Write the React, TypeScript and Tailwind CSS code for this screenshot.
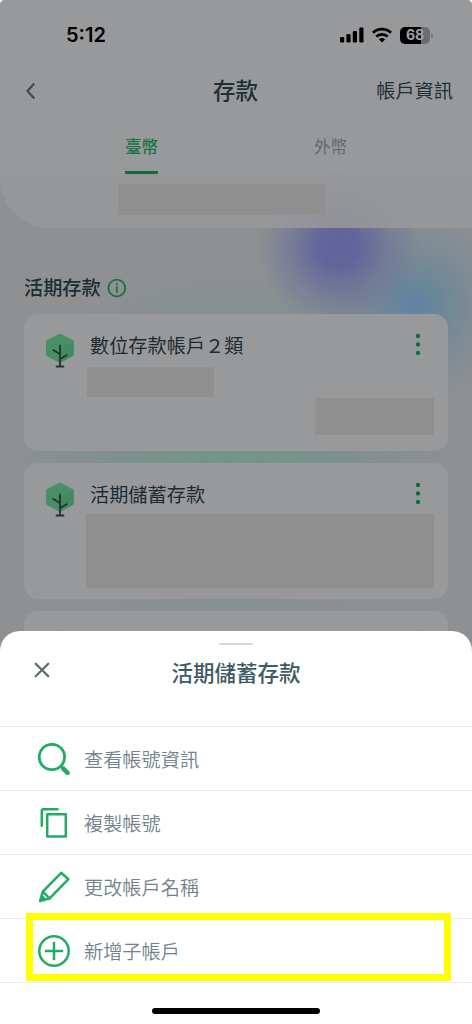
import type { ReactNode } from "react";

const GREEN = "#24ab62";

const SignalIcon = () => (
  <svg className="h-4 w-6" viewBox="0 0 24 16">
    <rect height="5.5" rx="1.2" width="4.2" x="0" y="10" />
    <rect height="8.5" rx="1.2" width="4.2" x="6.4" y="7" />
    <rect height="11.5" rx="1.2" width="4.2" x="12.8" y="4" />
    <rect height="15" rx="1.2" width="4.2" x="19.3" y="0.5" />
  </svg>
);

const WifiIcon = () => (
  <svg className="h-4 w-[20px]" viewBox="0 0 20 16">
    <g fill="none" stroke="#000" strokeWidth="2.8">
      <path d="M1 5.8a13 13 0 0 1 18 0" />
      <path d="M4.3 9.6a8.2 8.2 0 0 1 11.4 0" />
    </g>
    <path d="M6.9 12.4a4.4 4.4 0 0 1 6.2 0L10 15.6z" />
  </svg>
);

const Battery = () => (
  <div className="flex items-center gap-px">
    <div className="flex h-[17px] w-[30px] items-center justify-center rounded-[5px] bg-linear-to-r from-black from-70% to-[#6c6d6f] to-70% font-['Inter',sans-serif] text-[14px] leading-none font-bold text-[#a2a3a5]">
      68
    </div>
    <div className="h-[5px] w-[2px] rounded-r-full bg-[#77787a]" />
  </div>
);

const TreeIcon = () => (
  <svg className="mt-px h-9 w-7" viewBox="0 0 28 36">
    <path
      d="M14 2.8 26.6 9.4V22.8L14 29.5 1.4 22.8V9.4z"
      fill="#469064"
      stroke="#469064"
      strokeLinejoin="round"
      strokeWidth="2.6"
    />
    <path d="M14 16v14L27 22.8V9.4z" fill="#448a60" />
    <path
      d="M14 13.5v21M10.5 34.5h7M14 22.3 7.3 18.1M14 27 20.7 23.2"
      fill="none"
      stroke="#263134"
      strokeLinecap="round"
      strokeWidth="1.8"
    />
  </svg>
);

const MoreIcon = () => (
  <svg className="mt-px h-6 w-[6px]" fill="#08703f" viewBox="0 0 6 24">
    <circle cx="3" cy="4" r="2.2" />
    <circle cx="3" cy="12.4" r="2.2" />
    <circle cx="3" cy="20.9" r="2.2" />
  </svg>
);

const MenuIcon = ({ children }: { children: ReactNode }) => (
  <svg
    className="size-8 shrink-0"
    fill="none"
    stroke={GREEN}
    strokeLinecap="round"
    strokeLinejoin="round"
    strokeWidth="2.5"
    viewBox="0 0 32 32"
  >
    {children}
  </svg>
);

const menuItems = [
  {
    label: "查看帳號資訊",
    icon: (
      <MenuIcon>
        <circle cx="13.9" cy="14" r="12.7" strokeWidth="2.8" />
        <path d="m23 23.4 1.8 1.8" />
        <path d="m25.3 25.6 4.2 4.2" strokeWidth="4.6" />
      </MenuIcon>
    ),
  },
  {
    label: "複製帳號",
    icon: (
      <MenuIcon>
        <rect height="22.4" width="18.6" x="9.2" y="7.2" />
        <path d="M3.8 18.8V4q0-1.8 1.8-1.8h14" />
      </MenuIcon>
    ),
  },
  {
    label: "更改帳戶名稱",
    icon: (
      <MenuIcon>
        <path d="M2.2 30 4.8 20.6 23.2 1.8 30.4 8.2 11.6 27.4z" />
        <path d="M4.8 20.6 11.6 27.4" />
        <path d="M2.4 29.8 4 25.5l2.8 2.7z" fill={GREEN} />
      </MenuIcon>
    ),
  },
  {
    label: "新增子帳戶",
    icon: (
      <MenuIcon>
        <circle cx="16" cy="16" r="14.7" />
        <path d="M16 6.8v18.4M6.8 16h18.4" strokeLinecap="butt" />
      </MenuIcon>
    ),
  },
];

interface AccountCardProps {
  name: string;
  children?: ReactNode;
}

const AccountCard = ({ name, children }: AccountCardProps) => (
  <section className="h-[136.5px] rounded-[14px] bg-[#98999b] pt-[17px] pr-[14px] pl-[22px]">
    <div className="flex h-9 items-start">
      <TreeIcon />
      <h3 className="ml-4 flex-1 text-[19.2px] leading-[28px] text-[#1d2b31]">
        {name}
      </h3>
      <div className="mr-[13px]">
        <MoreIcon />
      </div>
    </div>
    {children}
  </section>
);

const Header = () => (
  <header className="relative h-[175px] bg-[#98999b] shadow-[0_1px_5px_rgba(0,0,0,0.14)]">
    <div className="flex h-[70px] items-center justify-between pr-[39px] pl-[66px]">
      <span className="font-['Inter',sans-serif] text-[20px] font-semibold text-black">
        5:12
      </span>
      <div className="flex items-center gap-[8px]">
        <SignalIcon />
        <WifiIcon />
        <Battery />
      </div>
    </div>
    <div className="grid h-[42px] grid-cols-[1fr_auto_1fr] items-center pr-[19px] pl-[25px] text-[#1f3036]">
      <svg
        className="h-5 w-3"
        fill="none"
        stroke="#434a50"
        strokeWidth="2.3"
        viewBox="0 0 12 20"
      >
        <path d="M9.3 2.5 2.5 10l6.8 7.5" />
      </svg>
      <h1 className="mr-[7px] mb-[3px] text-[22.5px] leading-none font-medium">
        存款
      </h1>
      <span className="justify-self-end text-[19.2px] leading-none">
        帳戶資訊
      </span>
    </div>
    <nav className="flex h-[62px] justify-between px-[125px] text-[16.5px]">
      <span className="flex h-full items-center border-b-[3px] border-[#18673f] pt-[10px] font-medium text-[#187346]">
        臺幣
      </span>
      <span className="flex h-full items-center pt-[7px] text-[#626a6e]">
        外幣
      </span>
    </nav>
  </header>
);

const Sheet = () => (
  <div className="absolute inset-x-0 bottom-0 flex h-[393px] flex-col rounded-t-[20px] bg-white">
    <div className="mx-auto mt-[12px] h-[2px] w-[34px] rounded-full bg-[#d2d7da]" />
    <div className="grid h-[56px] grid-cols-[1fr_auto_1fr] items-center px-[34px]">
      <svg
        className="mb-[7px] size-4"
        fill="none"
        stroke="#597069"
        strokeLinecap="round"
        strokeWidth="2.3"
        viewBox="0 0 16 16"
      >
        <path d="m1.7 1.7 12.6 12.6m0-12.6-12.6 12.6" />
      </svg>
      <h2 className="mb-[2px] text-[21.5px] leading-none font-medium text-[#405a64]">
        活期儲蓄存款
      </h2>
    </div>
    <ul className="mt-[25px] border-t border-[#eaedee]">
      {menuItems.map((item) => (
        <li
          className="flex h-16 items-center gap-[14px] border-b border-[#eaedee] pl-[38px] text-[19.2px] font-[350] text-[#72828a]"
          key={item.label}
        >
          {item.icon}
          <span className="pt-[2px] leading-none">{item.label}</span>
        </li>
      ))}
    </ul>
    <div className="mx-auto mt-[25px] h-[6px] w-[168px] rounded-full bg-black" />
    {/* Highlight around the last action */}
    <div className="absolute top-[282px] left-[26px] h-[68px] w-[425px] border-[7.5px] border-[#ffff00]" />
  </div>
);

export default function App() {
  return (
    <div className="h-[1024px] w-[472px] bg-white">
      <div className="relative h-full overflow-hidden rounded-t-[5px] bg-[#8f9092] font-['Noto_Sans_CJK_TC',sans-serif]">
        <div className="absolute top-[257px] left-0 h-[400px] w-[460px] bg-[radial-gradient(closest-side,#72958a_0%,#78938b_35%,#858f8f_65%,#8a9092_85%,transparent_100%)]" />
        <div className="absolute top-[205px] left-[315px] size-[200px] bg-[radial-gradient(closest-side,#6082a3_0%,#69869a_20%,#70889688_58%,transparent_100%)]" />
        <div className="absolute top-[165px] left-[257px] size-[164px] bg-[radial-gradient(closest-side,#61639b_0%,#63669a_25%,#6f7497b0_60%,transparent_100%)]" />
        <Header />
        <div className="relative h-[53px] rounded-bl-[50px] bg-[#979899]/90 pt-[9px] pl-[118px]">
          <div className="h-[31px] w-[207px] bg-[#8f8f8f]" />
        </div>
        <main className="relative px-6">
          <div className="flex h-[86px] items-center gap-[6px] pt-[34px]">
            <h2 className="text-[19.2px] leading-none font-medium text-[#1c2d34]">
              活期存款
            </h2>
            <svg
              className="size-5"
              fill="none"
              stroke="#187346"
              strokeWidth="1.8"
              viewBox="0 0 20 20"
            >
              <circle cx="9.8" cy="10" r="8.4" />
              <path d="M9.8 8.2v6.5M9.8 4.9v2" />
            </svg>
          </div>
          <div className="flex flex-col gap-[12px]">
            <AccountCard name="數位存款帳戶２類">
              <div className="ml-[41px] h-[30px] w-[127px] bg-[#8f8f8f]" />
              <div className="mt-px ml-auto h-[37px] w-[119px] bg-[#8f8f8f]" />
            </AccountCard>
            <AccountCard name="活期儲蓄存款">
              <div className="mt-[-2px] ml-[40px] h-[74px] bg-[#8f8f8f]" />
            </AccountCard>
            <AccountCard name="" />
          </div>
        </main>
        <Sheet />
      </div>
    </div>
  );
}
